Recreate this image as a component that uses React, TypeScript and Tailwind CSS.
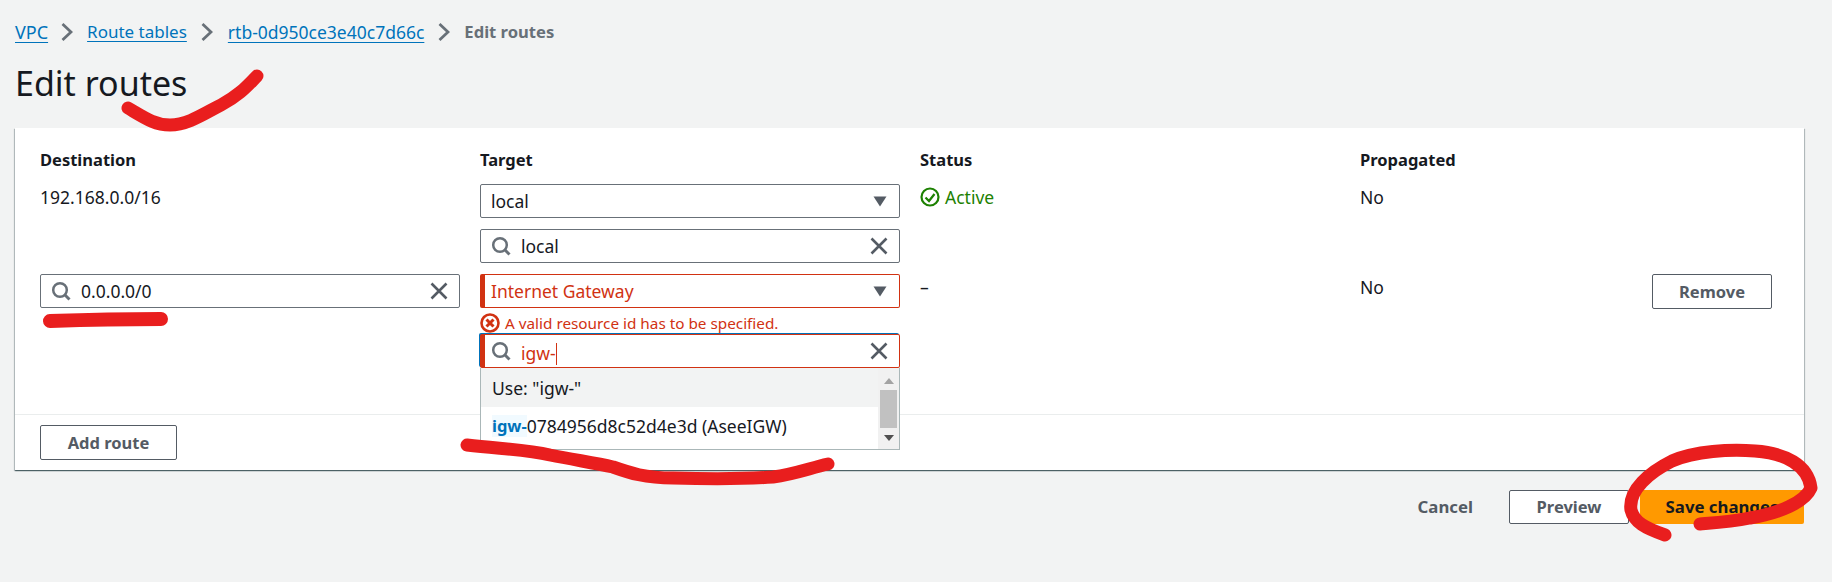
import React from "react";

const Search = () => (
  <svg width="20" height="20" viewBox="0 0 20 20" fill="none" stroke="#687078" strokeWidth="2.5" className="shrink-0">
    <circle cx="9" cy="9" r="6.8" />
    <path d="M13.8 13.8 L18.5 18.5" strokeWidth="3" />
  </svg>
);
const Close = () => (
  <svg width="18" height="18" viewBox="0 0 18 18" fill="none" stroke="#545b64" strokeWidth="2.6" className="shrink-0">
    <path d="M1.5 1.5 L16.5 16.5 M16.5 1.5 L1.5 16.5" />
  </svg>
);
const Caret = () => (
  <svg width="14" height="11" viewBox="0 0 14 11" className="shrink-0">
    <path d="M0.5 0.5 H13.5 L7 10.5 Z" fill="#545b64" />
  </svg>
);
const Chevron = () => (
  <svg width="12" height="20" viewBox="0 0 12 20" fill="none" stroke="#687078" strokeWidth="2.8">
    <path d="M1.5 2 L10 10 L1.5 18" />
  </svg>
);

function Select({ label, error }: { label: string; error?: boolean }) {
  return (
    <div
      className={
        "flex h-[34px] items-center justify-between rounded-[2px] border bg-white pr-[12px] " +
        (error ? "border-[#d13212] border-l-[5px] pl-[6px] text-[#d13212]" : "border-[#687078] pl-[10px] text-[#16191f]")
      }
    >
      <span>{label}</span>
      <Caret />
    </div>
  );
}

function SearchInput({ value, error, caret }: { value: string; error?: boolean; caret?: boolean }) {
  return (
    <div
      className={
        "flex h-[34px] items-center rounded-[2px] border bg-white pr-[11px] " +
        (error
          ? "border-[#d13212] border-l-[5px] pl-[6px] text-[#d13212] shadow-[-1px_-1px_0_0_#0073bb]"
          : "border-[#687078] pl-[10px] text-[#16191f]")
      }
    >
      <Search />
      <span className="ml-[10px] flex-1">
        {value}
        {caret && <span className="inline-block h-[22px] w-px translate-y-[5px] bg-[#d13212]" />}
      </span>
      <Close />
    </div>
  );
}

function Dropdown() {
  return (
    <div className="absolute left-0 right-0 top-[34px] z-10 flex h-[82px] border-b border-l border-r border-[#aab7b8] bg-white">
      <div className="flex-1">
        <div className="flex h-[39px] items-center bg-[#f2f3f3] pl-[11px] text-[#16191f]">Use: "igw-"</div>
        <div className="flex h-[37px] items-center pl-[11px] text-[#16191f]">
          <span className="bg-[#f1faff] text-[16.5px] font-bold text-[#0073bb]">igw-</span>
          <span>0784956d8c52d4e3d (AseeIGW)</span>
        </div>
      </div>
      <div className="flex w-[21px] flex-col items-center bg-[#f1f1f1]">
        <svg width="10" height="6" viewBox="0 0 10 6" className="mt-[10px]"><path d="M0 6 H10 L5 0 Z" fill="#a3a3a3" /></svg>
        <div className="mt-[6px] h-[38px] w-[17px] bg-[#c1c1c1]" />
        <svg width="10" height="6" viewBox="0 0 10 6" className="mt-[7px]"><path d="M0 0 H10 L5 6 Z" fill="#505050" /></svg>
      </div>
    </div>
  );
}

function Button({ children, className }: { children: React.ReactNode; className: string }) {
  return (
    <button className={"flex items-center justify-center rounded-[2px] border border-[#545b64] bg-white text-[16.5px] font-bold text-[#545b64] " + className}>
      {children}
    </button>
  );
}

const Ink = () => (
  <svg className="pointer-events-none absolute left-0 top-0 z-20" width="1832" height="582" viewBox="0 0 1832 582" fill="none" stroke="#e91e1e" strokeLinecap="round" strokeLinejoin="round">
    <path d="M128 108 C145 118 155 125 170 125 C188 125 205 113 221 105 C240 95 248 85 257 76" strokeWidth="13" />
    <path d="M50 321 C80 320 130 319 161 319" strokeWidth="14" />
    <path d="M467 445 C500 449 525 449 550 455 C575 460 595 463 613 467 C630 473 645 478 673 478 C710 479 745 479 773 477 C795 474 810 468 828 464" strokeWidth="13" />
    <path d="M1665 535 C1645 528 1634 522 1631 510 C1628 490 1650 472 1672 461 C1695 451 1730 449 1755 451 C1785 453 1808 465 1811 488 C1805 502 1780 513 1750 518 C1730 522 1712 523 1700 524" strokeWidth="13" />
  </svg>
);

export default function App() {
  return (
    <div className="relative h-[582px] w-[1832px] overflow-hidden bg-[#f2f3f3] font-['Noto_Sans','Open_Sans',sans-serif] text-[17.5px] leading-[22px] text-[#16191f]">
      <Ink />
      <div className="pl-[15px] pt-[21px]">
        <nav className="flex h-[22px] items-center">
          <a className="text-[18px] text-[#0073bb] underline underline-offset-[3px]">VPC</a>
          <span className="ml-[13px] mr-[14px] flex"><Chevron /></span>
          <a className="text-[17px] text-[#0073bb] underline underline-offset-[3px]">Route tables</a>
          <span className="ml-[14px] mr-[15px] flex"><Chevron /></span>
          <a className="text-[#0073bb] underline underline-offset-[3px]">rtb-0d950ce3e40c7d66c</a>
          <span className="mx-[14px] flex"><Chevron /></span>
          <span className="text-[16.6px] font-bold text-[#687078]">Edit routes</span>
        </nav>
        <h1 className="mt-[20px] text-[34px] font-normal leading-[40px]">Edit routes</h1>

        <section className="mt-[25px] h-[342px] w-[1789px] bg-white shadow-[0_1px_1px_0_rgba(0,28,36,0.5),1px_1px_1px_0_rgba(0,28,36,0.2),-1px_1px_1px_0_rgba(0,28,36,0.2)]">
          <div className="h-[286px] px-[25px] pt-[21px]">
            <div className="grid grid-cols-[420px_420px_420px_1fr] gap-x-[20px] text-[16.5px] font-bold">
              <div>Destination</div>
              <div>Target</div>
              <div>Status</div>
              <div>Propagated</div>
            </div>
            <div className="mt-[13px] grid h-[79px] grid-cols-[420px_420px_420px_1fr] gap-x-[20px]">
              <div className="pt-[2px]">192.168.0.0/16</div>
              <div className="flex flex-col gap-[11px]">
                <Select label="local" />
                <SearchInput value="local" />
              </div>
              <div className="flex h-[22px] items-center gap-[5px] pt-[4px] text-[#1d8102]">
                <svg width="20" height="20" viewBox="0 0 20 20" fill="none" stroke="#1d8102" strokeWidth="2.2">
                  <circle cx="10" cy="10" r="8.5" />
                  <path d="M5.5 10.5 L9 14 L14.5 7" />
                </svg>
                Active
              </div>
              <div className="pt-[2px]">No</div>
            </div>
            <div className="mt-[11px] grid grid-cols-[420px_420px_420px_1fr] gap-x-[20px]">
              <div><SearchInput value="0.0.0.0/0" /></div>
              <div>
                <Select label="Internet Gateway" error />
                <div className="mt-[5px] flex h-[20px] items-center gap-[5px] text-[15.3px] text-[#d13212]">
                  <svg width="20" height="20" viewBox="0 0 20 20" fill="none" stroke="#d13212" strokeWidth="2.6">
                    <circle cx="10" cy="10" r="8.5" />
                    <path d="M6.5 6.5 L13.5 13.5 M13.5 6.5 L6.5 13.5" strokeWidth="3" />
                  </svg>
                  A valid resource id has to be specified.
                </div>
                <div className="relative mt-[1px]">
                  <SearchInput value="igw-" error caret />
                  <Dropdown />
                </div>
              </div>
              <div className="pt-[2px]">–</div>
              <div className="flex items-start justify-between pr-[7px]">
                <span className="pt-[2px]">No</span>
                <Button className="h-[35px] w-[120px]">Remove</Button>
              </div>
            </div>
          </div>
          <div className="border-t border-[#eaeded] px-[25px] pt-[10px]">
            <Button className="h-[35px] w-[137px]">Add route</Button>
          </div>
        </section>

        <div className="mt-[20px] flex w-[1789px] items-center justify-end">
          <span className="mr-[36px] text-[16.8px] font-bold text-[#545b64]">Cancel</span>
          <Button className="mr-[11px] h-[34px] w-[120px]">Preview</Button>
          <button className="h-[34px] w-[164px] rounded-[2px] bg-[#ff9900] text-[16.8px] font-bold text-[#16191f]">Save changes</button>
        </div>
      </div>
    </div>
  );
}
